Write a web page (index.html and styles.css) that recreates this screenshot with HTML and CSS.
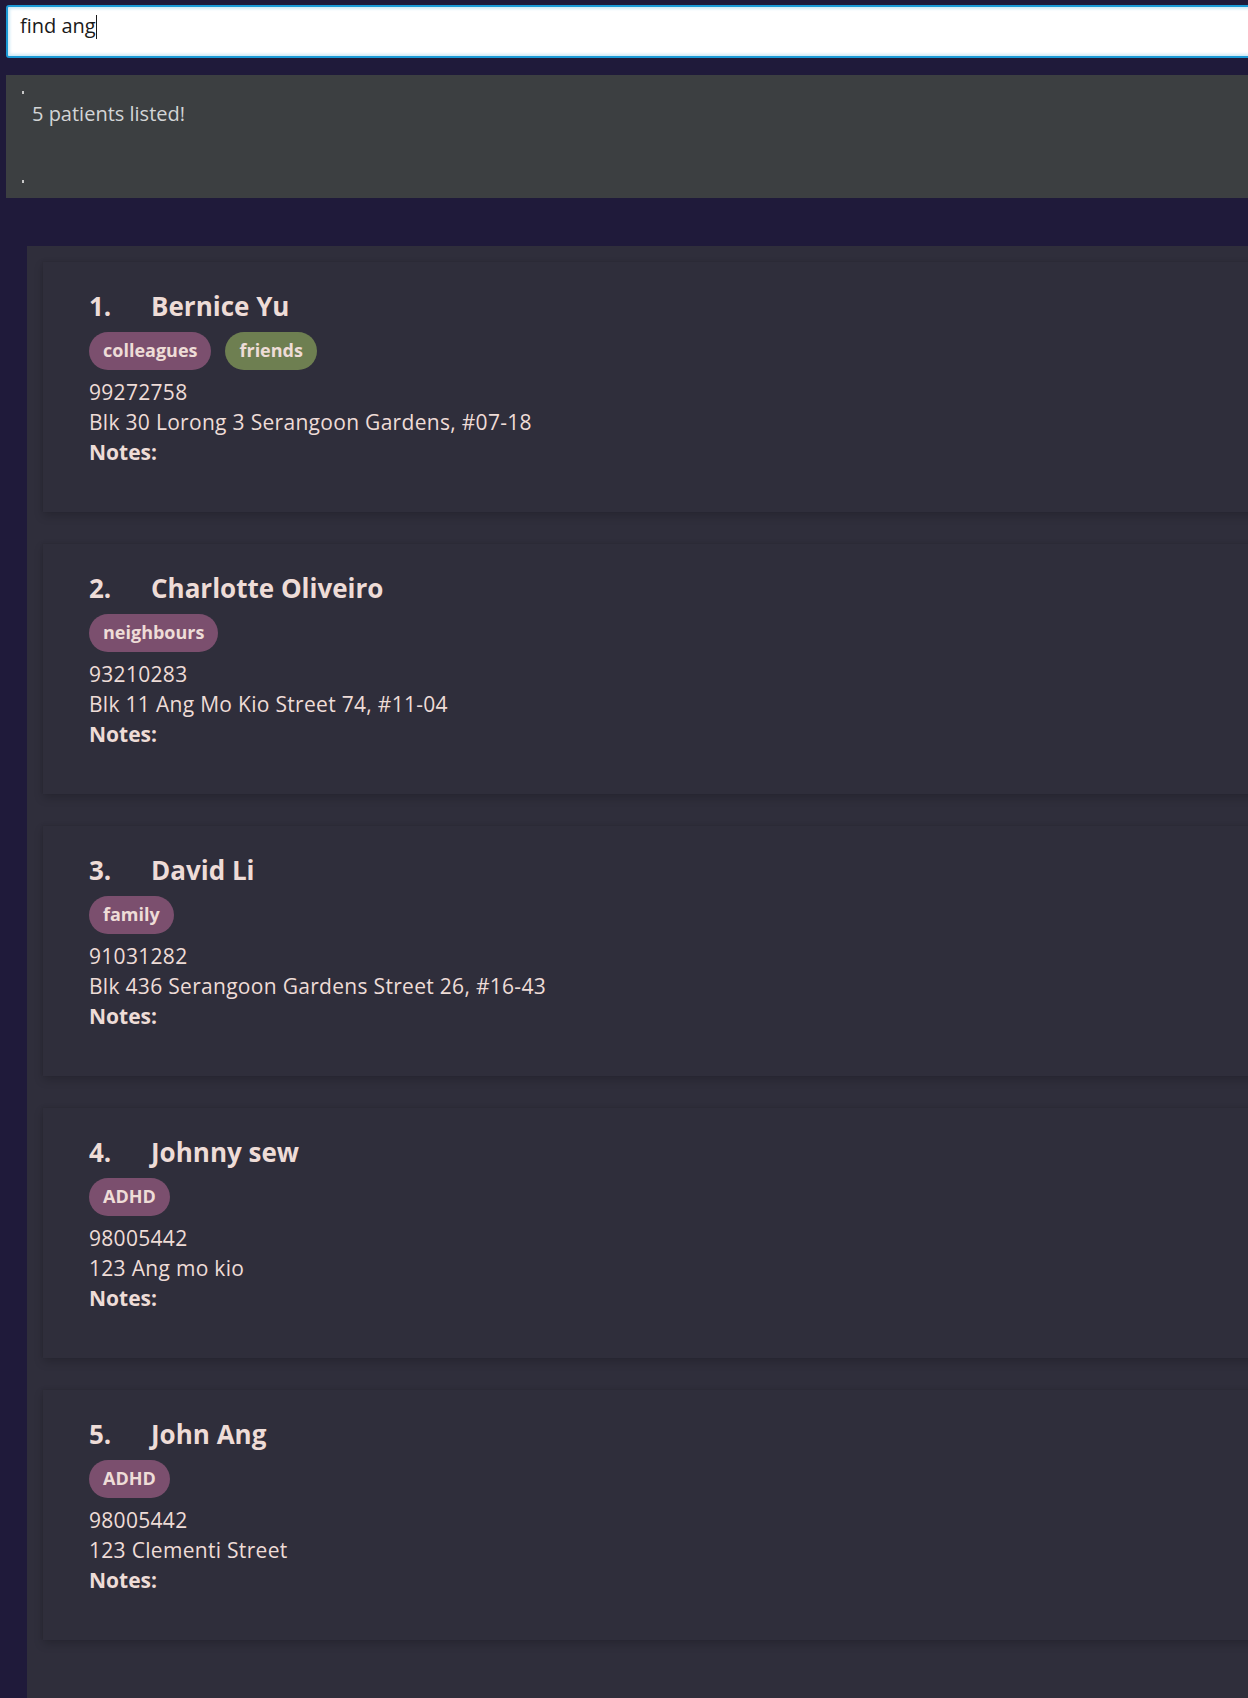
FILE: index.html
```html
<!DOCTYPE html>
<html lang="en">
<head>
<meta charset="utf-8">
<title>Patients</title>
<link rel="stylesheet" href="styles.css">
</head>
<body>
<div class="app">
  <div class="command-bar">
    <div class="command-input">find ang<span class="caret"></span></div>
  </div>

  <div class="result-box">
    <div class="mark mark-top"></div>
    <div class="result-text">5 patients listed!</div>
    <div class="mark mark-bottom"></div>
  </div>

  <div class="patient-list">
    <div class="card">
      <div class="name-row"><span class="index">1.</span><span class="name">Bernice Yu</span></div>
      <div class="tags"><span class="tag tag-purple">colleagues</span><span class="tag tag-green">friends</span></div>
      <div class="line">99272758</div>
      <div class="line">Blk 30 Lorong 3 Serangoon Gardens, #07-18</div>
      <div class="line notes">Notes:</div>
    </div>

    <div class="card">
      <div class="name-row"><span class="index">2.</span><span class="name">Charlotte Oliveiro</span></div>
      <div class="tags"><span class="tag tag-purple">neighbours</span></div>
      <div class="line">93210283</div>
      <div class="line">Blk 11 Ang Mo Kio Street 74, #11-04</div>
      <div class="line notes">Notes:</div>
    </div>

    <div class="card">
      <div class="name-row"><span class="index">3.</span><span class="name">David Li</span></div>
      <div class="tags"><span class="tag tag-purple">family</span></div>
      <div class="line">91031282</div>
      <div class="line">Blk 436 Serangoon Gardens Street 26, #16-43</div>
      <div class="line notes">Notes:</div>
    </div>

    <div class="card">
      <div class="name-row"><span class="index">4.</span><span class="name">Johnny sew</span></div>
      <div class="tags"><span class="tag tag-purple">ADHD</span></div>
      <div class="line">98005442</div>
      <div class="line">123 Ang mo kio</div>
      <div class="line notes">Notes:</div>
    </div>

    <div class="card">
      <div class="name-row"><span class="index">5.</span><span class="name">John Ang</span></div>
      <div class="tags"><span class="tag tag-purple">ADHD</span></div>
      <div class="line">98005442</div>
      <div class="line">123 Clementi Street</div>
      <div class="line notes">Notes:</div>
    </div>
  </div>
</div>
</body>
</html>
```

FILE: styles.css
```css
html, body {
  margin: 0;
  padding: 0;
}

body {
  background: #1f1a3a;
  font-family: "Open Sans", "Noto Sans", "DejaVu Sans", sans-serif;
  overflow: hidden;
  height: 1698px;
}

.app {
  display: flex;
  flex-direction: column;
  height: 1698px;
  overflow: hidden;
}

/* command input */
.command-bar {
  padding: 5px 0 0 6px;
}

.command-input {
  box-sizing: border-box;
  height: 53px;
  width: calc(100% + 20px);
  background: #ffffff;
  border: 2px solid #1b9ad6;
  border-radius: 3px;
  box-shadow: inset 0 0 3px 2px #cfeaf6;
  padding: 5px 0 0 12px;
  font-size: 20px;
  line-height: 28px;
  color: #1a1a1a;
  display: flex;
  align-items: flex-start;
}

.caret {
  display: inline-block;
  width: 1px;
  height: 24px;
  margin-top: 3px;
  background: #1a1a1a;
}

/* result display */
.result-box {
  margin: 17px 0 0 6px;
  box-sizing: border-box;
  height: 123px;
  width: calc(100% + 20px);
  background: #3c3f41;
  padding: 16px 0 0 16px;
  color: #d3d5d6;
}

.mark {
  width: 2px;
  height: 3px;
  background: #c8c8c8;
}

.result-text {
  margin: 6px 0 0 10px;
  font-size: 20px;
  line-height: 28px;
}

.mark-bottom {
  margin-top: 52px;
}

/* list */
.patient-list {
  flex: 1;
  margin: 48px 0 0 27px;
  width: calc(100% + 40px);
  background: #2f2e3b;
  padding: 16px 0 0 16px;
  display: flex;
  flex-direction: column;
  gap: 32px;
}

.card {
  box-sizing: border-box;
  height: 250px;
  background: #2f2e3b;
  box-shadow: 0 4px 9px rgba(0, 0, 0, 0.18), -1px -1px 2px rgba(0, 0, 0, 0.06);
  padding: 27px 0 0 46px;
  color: #eedcd7;
}

.name-row {
  display: flex;
  font-size: 26px;
  line-height: 35px;
  font-weight: 700;
}

.index {
  width: 62px;
  flex: none;
}

.tags {
  display: flex;
  gap: 14px;
  margin-top: 8px;
  margin-bottom: 7px;
}

.tag {
  height: 38px;
  box-sizing: border-box;
  padding: 0 14px;
  border-radius: 19px;
  font-size: 18px;
  font-weight: 700;
  line-height: 37px;
  color: #eedcd7;
}

.tag-purple {
  background: #7b4f6e;
}

.tag-green {
  background: #6e7f51;
}

.line {
  font-size: 21px;
  line-height: 30px;
  letter-spacing: 0.3px;
}

.notes {
  font-weight: 700;
  letter-spacing: 0;
}
```
